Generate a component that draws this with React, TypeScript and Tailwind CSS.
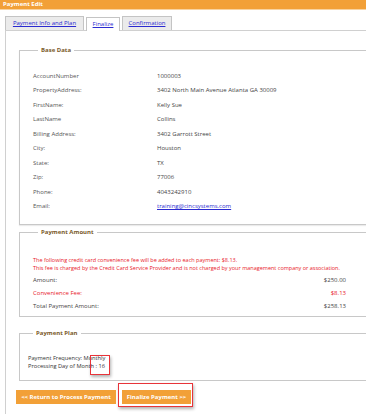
const rows = [
  ["AccountNumber", "1000003"],
  ["PropertyAddress:", "3402 North Main Avenue Atlanta GA 30009"],
  ["FirstName:", "Kelly Sue"],
  ["LastName", "Collins"],
  ["Billing Address:", "3402 Garrott Street"],
  ["City:", "Houston"],
  ["State:", "TX"],
  ["Zip:", "77006"],
  ["Phone:", "4043242910"],
];

const Legend = ({ children }: any) => (
  <legend className="ml-[5px] px-[3px] text-[6px] font-bold text-[#7a5a2a] leading-[8px]">
    {children}
  </legend>
);

export default function App() {
  return (
    <div
      className="w-[366px] h-[414px] overflow-hidden bg-white relative"
      style={{ fontFamily: '"Open Sans", "Liberation Sans", sans-serif' }}
    >
      <div className="h-[9px] bg-[#f2a037] text-white font-bold text-[6px] leading-[9px] pl-[3px]">
        Payment Edit
      </div>
      <div className="h-px bg-[#f8d3a0]" />

      <div className="w-[420px]">
        <div className="flex items-end pl-[5px] pt-[6px] gap-[2px]">
          <div className="h-[14px] w-[79px] border border-b-0 border-[#c4c4c4] bg-[#ebebeb] flex items-center justify-center text-[6px] text-[#2a2ad0] underline">
            Payment Info and Plan
          </div>
          <div className="h-[14px] w-[34px] border border-b-0 border-[#c4c4c4] bg-white flex items-center justify-center text-[6px] text-[#2a2ad0] underline relative top-px">
            Finalize
          </div>
          <div className="h-[14px] w-[50px] border border-b-0 border-[#c4c4c4] bg-[#ebebeb] flex items-center justify-center text-[6px] text-[#2a2ad0] underline">
            Confirmation
          </div>
        </div>

        <div className="ml-[5px] border-t border-l border-[#d0d0d0] pl-[13px] pt-[15px] h-[400px]">
          <fieldset className="border border-[#c8c8c8] pt-[15px] pb-[10px] pl-[13px] shadow-[0_1px_1px_rgba(0,0,0,0.08)]">
            <Legend>Base Data</Legend>
            {rows.map(([k, v]) => (
              <div key={k} className="flex h-[14.5px] items-center text-[6px] text-[#555]">
                <span className="w-[124px]">{k}</span>
                <span className="text-[#444]">{v}</span>
              </div>
            ))}
            <div className="flex h-[14.5px] items-center text-[6px] text-[#555]">
              <span className="w-[124px]">Email:</span>
              <span className="text-[#2a2ad0] underline">training@cincsystems.com</span>
            </div>
          </fieldset>

          <fieldset className="mt-[3px] border border-[#c8c8c8] pt-[21px] pb-[4px] pl-[13px] pr-[73px]">
            <Legend>Payment Amount</Legend>
            <div className="text-[5.5px] leading-[7.5px] text-[#e8202a]">
              <div>The following credit card convenience fee will be added to each payment: $8.13.</div>
              <div>This fee is charged by the Credit Card Service Provider and is not charged by your management company or association.</div>
            </div>
            <div className="flex justify-between items-center h-[13px] mt-[2px] text-[6px] text-[#444]">
              <span>Amount:</span>
              <span>$250.00</span>
            </div>
            <div className="flex justify-between items-center h-[13px] text-[6px] text-[#e8202a]">
              <span>Convenience Fee:</span>
              <span>$8.13</span>
            </div>
            <div className="flex justify-between items-center h-[12px] text-[6px] text-[#444]">
              <span>Total Payment Amount:</span>
              <span>$258.13</span>
            </div>
          </fieldset>

          <fieldset className="mt-[12px] border border-[#c8c8c8] pt-[17px] pb-[10px] pl-[8px]">
            <Legend>Payment Plan</Legend>
            <div className="text-[5.7px] leading-[8px] text-[#333]">
              <div>Payment Frequency: Monthly</div>
              <div>Processing Day of Month : 16</div>
            </div>
          </fieldset>

          <div className="flex gap-[6px] mt-[9px] -ml-[3px]">
            <button className="h-[14px] w-[100px] bg-[#f2a037] text-white text-[6px] font-bold">
              &lt;&lt; Return to Process Payment
            </button>
            <button className="h-[14px] w-[69px] bg-[#f2a037] text-white text-[6px] font-bold">
              Finalize Payment &gt;&gt;
            </button>
          </div>
        </div>
      </div>

      <div className="absolute left-[90px] top-[355px] w-[20px] h-[20px] border-[1.5px] border-[#e8343a] shadow-[1px_2px_3px_rgba(0,0,0,0.3)]" />
      <div className="absolute left-[118px] top-[383px] w-[75px] h-[24px] border-[1.5px] border-[#e8343a] shadow-[1px_2px_3px_rgba(0,0,0,0.3)]" />
    </div>
  );
}
